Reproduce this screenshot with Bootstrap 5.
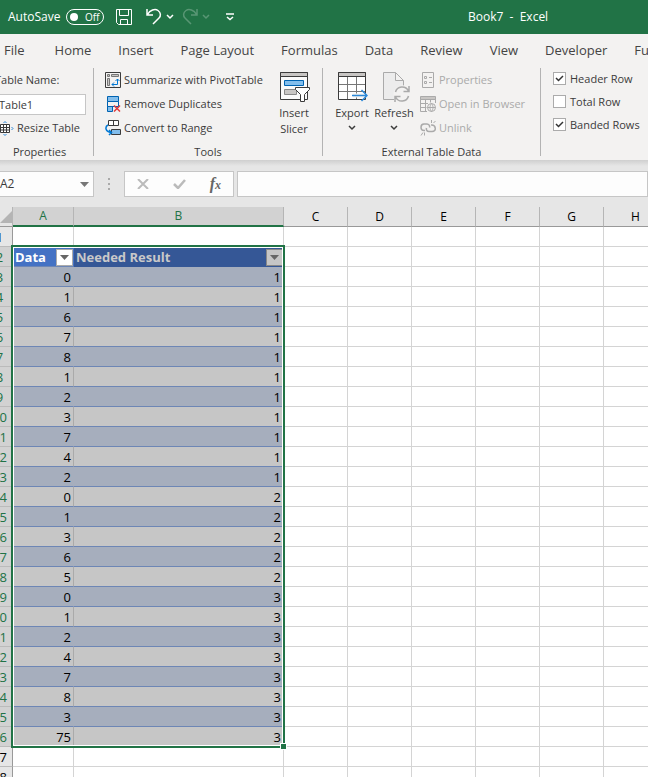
<!DOCTYPE html>
<html lang="en">
<head>
<meta charset="utf-8">
<meta name="viewport" content="width=device-width, initial-scale=1">
<title>Book7 - Excel</title>
<link href="https://cdn.jsdelivr.net/npm/bootstrap@5.3.0/dist/css/bootstrap.min.css" rel="stylesheet">
<style>
body{font:12px/16px "Open Sans","Noto Sans",sans-serif;color:#3b3b3b;background:#e6e6e6;overflow:hidden}
button,input{font:inherit;color:inherit}
button{background:none;border:0;padding:0}
svg{display:block;flex:none;fill:none;stroke:currentColor}
.titlebar{background:#217346;height:34px;padding-left:8px}
.quick{width:240px}
.toggle-pill{width:38px;height:16px;border:1px solid #fff;border-radius:8px;margin:0 12px 0 6px;padding:0 4px 0 3px;font-size:10px;line-height:14px}
.knob{width:8px;height:8px;border-radius:50%;background:#fff}
.save{margin-right:14px}
.book-title{padding-left:220px}
.tabs{background:#f3f2f1;height:32px;padding-left:4px;gap:27px}
.tabs a{color:#444;text-decoration:none;font-size:13px;white-space:nowrap;flex:none}
.tabs .file-tab{padding-right:3px}
.ribbon{background:#f3f2f1;height:94px;padding-top:2px;font-size:11px}
.rgroup{flex:none;border-right:1px solid #b3b3b3;height:88px}
.rbody{height:74px}
.glabel{line-height:20px;text-align:center}
.g-props{width:108px;margin-left:-14px}
.g-props .rbody{padding-left:9px}
.g-tools{width:229px}
.g-tools .rbody{padding:0 7px 0 11px}
.g-ext{width:218px}
.line{height:24px;gap:3px;white-space:nowrap}
.tname{width:91px;height:21px;border:1px solid #c6c6c6;background:#fff;padding:0 3px}
.bigbtn{width:42px;padding-top:2px}
.bigbtn span{line-height:16px;margin-top:3px}
.off{color:#aaa;margin-left:5px}
.gray-ic{color:#aaa}
.opts{padding:0 0 0 12px;margin-top:-1px}
.opts .form-check-input{width:13px;height:13px;border:1px solid #ababab;border-radius:0;margin:0;background-color:#fff;box-shadow:none;background-size:13px}
.opts .form-check-input:checked{background-image:url("data:image/svg+xml,%3Csvg xmlns='http://www.w3.org/2000/svg' viewBox='0 0 13 13'%3E%3Cpath d='M3 6l2.500 2.500L10 4' fill='none' stroke='%23333' stroke-width='1.500'/%3E%3C/svg%3E")}
.opts label{line-height:23px;white-space:nowrap}
.shade{height:6px;background:linear-gradient(#cfcfcf,#e6e6e6)}
.fbar{padding:5px 0 10px}
.fbox{height:26px;background:#fdfdfd;border:1px solid #c6c6c6}
.namebox{width:95px;margin-left:-1px}
.namebox input{width:70px;border:0;background:none;padding:0}
.dots{margin:0 13px 0 14px}
.fxbox{width:110px;margin-right:3px;color:#bbb}
.fx{color:#666;font:italic bold 16px/16px "Liberation Serif",serif}
.fx sub{font-size:12px;bottom:0}
.sheet{position:relative;overflow:hidden;background:#fff}
.grid{table-layout:fixed;width:681px;margin-left:-13px;border-collapse:separate;border-spacing:0;color:#000;font-size:13px;line-height:17px}
.grid th,.grid td{height:20px;padding:2px 2px 0;border-right:1px solid #d4d4d4;border-bottom:1px solid #d4d4d4;font-weight:400;white-space:nowrap}
.grid td{text-align:right}
.grid thead th{background:#e6e6e6;text-align:center;padding:0;line-height:19px;font-size:12px;border-bottom-color:#999;border-right-color:#b5b5b5}
.grid thead th.picked{background:#d2d2d2;color:#217346;border-bottom:2px solid #217346;line-height:18px}
.grid tbody th{background:#e6e6e6;text-align:center;padding:2px 0 0;border-right-color:#999;border-bottom-color:#bbb}
.grid tbody tr.sel th{background:#d2d2d2;color:#217346}
.grid tr.odd td.fill{background:#a6aebd;border-color:#6d86b5}
.grid tr.odd td.num{border-right-color:#a6aebd}
.grid tr.even td.fill{background:#c6c6c6;border-bottom-color:#6d86b5;border-right-color:#aaa}
.grid td.head-a,.grid td.head-b{background:#4472c4;color:#fff;border-right-color:#4472c4;border-bottom-color:#6d86b5;font-weight:700;padding-right:0}
.grid td.head-b{background:#355796;color:#c9c9c9;border-color:#355796}
.filter{width:17px;height:17px;background:#fff;border:1px solid #ababab;color:#666}
.head-b .filter{background:#c6c6c6;border-color:#888}
.corner{display:block;margin-left:auto}
.outline-sel{position:absolute;left:11px;top:38px;width:274px;height:503px;border:2px solid #217346;box-shadow:inset 0 0 0 1px #fff;pointer-events:none}
.outline-sel i{position:absolute;right:-4px;bottom:-4px;width:7px;height:7px;background:#217346;border:1px solid #fff}
</style>
<script src="https://cdn.jsdelivr.net/npm/bootstrap@5.3.0/dist/js/bootstrap.bundle.min.js"></script>
</head>
<body>
<header class="titlebar d-flex align-items-center text-white">
  <div class="quick d-flex align-items-center flex-shrink-0">
    <span>AutoSave</span>
    <button class="toggle-pill d-flex align-items-center justify-content-between" aria-label="AutoSave off"><span class="knob"></span><span>Off</span></button>
    <button class="save" aria-label="Save"><svg width="16" height="16" viewBox="0 0 16 16"><path d="M.5.5h15v15h-13l-2-2zM3.500.5v6h9v-6M4.500 15.500v-5h7v5"/></svg></button>
    <button class="d-flex align-items-center gap-1" aria-label="Undo"><svg width="16" height="18" viewBox="0 0 16 18" stroke-width="1.500"><path d="M1 1v6h6M1.500 6.500C4 2 9 .500 12 2.500s3 5.500 1 7.500L7 16"/></svg><svg width="8" height="6" viewBox="0 0 8 6" stroke-width="1.500"><path d="M1 1l3 3 3-3"/></svg></button>
    <button class="d-flex align-items-center gap-1 ms-2 opacity-25" aria-label="Redo"><svg width="16" height="18" viewBox="0 0 16 18" stroke-width="1.500"><path d="M15 1v6H9M14.500 6.500C12 2 7 .500 4 2.500s-3 5.500-1 7.500l6 6"/></svg><svg width="8" height="6" viewBox="0 0 8 6" stroke-width="1.500"><path d="M1 1l3 3 3-3"/></svg></button>
    <button class="ms-3" aria-label="Customize Quick Access Toolbar"><svg width="8" height="8" viewBox="0 0 8 8" stroke-width="1.500"><path d="M0 1h8M1 4l3 2.500L7 4"/></svg></button>
  </div>
  <span class="book-title text-nowrap">Book7&nbsp; -&nbsp; Excel</span>
</header>
<nav class="tabs d-flex align-items-center">
  <a class="file-tab" href="#">File</a><a href="#">Home</a><a href="#">Insert</a><a href="#">Page Layout</a><a href="#">Formulas</a><a href="#">Data</a><a href="#">Review</a><a href="#">View</a><a href="#">Developer</a><a href="#">Fu</a>
</nav>
<section class="ribbon d-flex">
  <div class="rgroup g-props">
    <div class="rbody">
      <label class="line d-flex align-items-center" for="tn">Table Name:</label>
      <div class="line d-flex align-items-center"><input class="tname" id="tn" value="Table1"></div>
      <button class="line d-flex align-items-center ps-1"><svg width="15" height="15" viewBox="0 0 15 15"><path fill="#fff" d="M1.500 3.500h9v8h-9z"/><path d="M1.500 6.500h9M1.500 9h9M4.500 3.500v8M7.500 3.500v8"/><path stroke="#2b88d8" d="M4.500 2L6 .5 7.500 2M4.500 13L6 14.500 7.500 13M12.500 6L14 7.500 12.500 9"/></svg>Resize Table</button>
    </div>
    <div class="glabel">Properties</div>
  </div>
  <div class="rgroup g-tools">
    <div class="rbody d-flex justify-content-between">
      <div>
        <button class="line d-flex align-items-center"><svg width="16" height="16" viewBox="0 0 16 16"><path d="M.5.5h15v15H.5z"/><path fill="#c8c6c4" stroke="#777" d="M2.500 2.500h2v2h-2zM6.500 2.500h7v2h-7zM2.500 6.500h2v7h-2z"/><path stroke="#0078d4" d="M7 12.500h5.500V7M9 10.500l-2 2 2 2M10.500 9l2-2 2 2"/></svg>Summarize with PivotTable</button>
        <button class="line d-flex align-items-center"><svg width="16" height="16" viewBox="0 0 16 16"><path fill="#83beec" stroke="#0063b1" d="M2.500.5h11v5h-11zM2.500 10.500v5h5v-5z"/><path stroke="#0063b1" d="M2.500 5.500v5h11v-5"/><path stroke="#e03c3c" stroke-width="1.500" d="M9 9.500l6 6M15 9.500l-6 6"/></svg>Remove Duplicates</button>
        <button class="line d-flex align-items-center"><svg width="16" height="16" viewBox="0 0 16 16"><path fill="#fff" d="M3.500.5h10v5h-10zM8.500.5v5"/><path fill="#83beec" d="M6.500 9.500h9v5h-9z"/><path stroke="#0078d4" stroke-width="1.500" d="M3 5C-.5 7 .5 12 6 12.500M4 10l2.500 2.500L4 15"/></svg>Convert to Range</button>
      </div>
      <button class="bigbtn d-flex flex-column align-items-center"><svg width="32" height="32" viewBox="0 0 32 32"><path fill="#fafafa" d="M2.500 2.500h27v27h-27z"/><path fill="#c8c6c4" d="M2.500 2.500h27v4h-27z"/><path fill="#83beec" stroke="#0063b1" d="M6.500 10.500h19v5h-19z"/><path fill="#c8c6c4" stroke="#888" d="M6.500 19.500h12v5h-12z"/><path fill="#fff" d="M17.500 17.500h14v2l-5 5v7h-4v-7l-5-5z"/></svg><span>Insert<br>Slicer</span></button>
    </div>
    <div class="glabel">Tools</div>
  </div>
  <div class="rgroup g-ext">
    <div class="rbody d-flex">
      <button class="bigbtn ms-2 d-flex flex-column align-items-center"><svg width="32" height="32" viewBox="0 0 32 32"><path fill="#fff" stroke="none" d="M2.500 2.500h27v27h-27z"/><path d="M2.500 14.500h27M2.500 21.500h27M11.500 6.500v23M20.500 6.500v23" stroke="#777"/><path d="M2.500 2.500h27v27h-27z"/><path fill="#c8c6c4" d="M2.500 2.500h27v4h-27z"/><path stroke="#f3f2f1" stroke-width="4" d="M17 25.500h14"/><path stroke="#2b88d8" stroke-width="1.500" d="M16 25.500h15M25.500 20l5.500 5.500-5.500 5.500"/></svg><span>Export</span><svg class="mt-1" width="8" height="6" viewBox="0 0 8 6" stroke-width="1.500"><path d="M1 1l3 3 3-3"/></svg></button>
      <button class="bigbtn d-flex flex-column align-items-center"><svg class="gray-ic" width="32" height="32" viewBox="0 0 32 32"><path fill="#ececec" d="M16 29.500H5.500v-27h12l8 8v5M17.500 2.500v8h8"/><circle cx="24" cy="24" r="8.500" fill="#f3f2f1" stroke="none"/><path stroke-width="1.500" d="M17.500 22c1.500-6 10-7 13-1M31 16v5.500h-5.500M30.500 26c-1.500 6-10 7-13 1M17 32v-5.500h5.500"/></svg><span>Refresh</span><svg class="mt-1" width="8" height="6" viewBox="0 0 8 6" stroke-width="1.500"><path d="M1 1l3 3 3-3"/></svg></button>
      <div class="off">
        <button class="line d-flex align-items-center" disabled><svg width="16" height="16" viewBox="0 0 16 16"><path d="M2.500.5h11v15h-11z"/><path d="M4.500 4.500h2v2h-2zM4.500 9.500h2v2h-2zM9 5.500h3M9 10.500h3"/></svg>Properties</button>
        <button class="line d-flex align-items-center" disabled><svg width="16" height="16" viewBox="0 0 16 16"><path fill="#c8c6c4" d="M.5.5h15v3H.5z"/><path d="M7 15.500H.5V3.500h15V7M.5 7.500H8M.5 11.500h6M5.500 3.500v12M10.500 3.500v3"/><circle cx="11.500" cy="11.500" r="4"/><path d="M7.500 11.500h8M11.500 7.500c-2 2.500-2 5.500 0 8c2-2.500 2-5.500 0-8"/></svg>Open in Browser</button>
        <button class="line d-flex align-items-center" disabled><svg width="16" height="16" viewBox="0 0 16 16"><path stroke-width="1.500" d="M5 10.500H4C0 10.500 0 4 4 4h3c2 0 3 2 2.500 3.500M11 5c5-.5 6 6.500 1 6.500H9C7 11.500 6 10 6.500 8"/><path d="M11.500 0v3M15.500 1l-2 2M1 15.500l2-3M4.500 15.500v-3"/></svg>Unlink</button>
      </div>
    </div>
    <div class="glabel">External Table Data</div>
  </div>
  <div class="opts">
    <div class="d-flex align-items-center gap-1"><input class="form-check-input" type="checkbox" id="c1" checked><label for="c1">Header Row</label></div>
    <div class="d-flex align-items-center gap-1"><input class="form-check-input" type="checkbox" id="c2"><label for="c2">Total Row</label></div>
    <div class="d-flex align-items-center gap-1"><input class="form-check-input" type="checkbox" id="c3" checked><label for="c3">Banded Rows</label></div>
  </div>
</section>
<div class="shade"></div>
<div class="fbar d-flex align-items-center">
  <div class="fbox namebox d-flex align-items-center justify-content-between pe-1 flex-shrink-0"><input value="A2" aria-label="Name box"><button aria-label="Names"><svg width="9" height="5" viewBox="0 0 9 5"><path d="M0 0h9L4.500 5z" fill="#777" stroke="none"/></svg></button></div>
  <svg class="dots" width="3" height="12" viewBox="0 0 3 12"><path d="M0 0h2v2H0zM0 5h2v2H0zM0 10h2v2H0z" fill="#aaa" stroke="none"/></svg>
  <div class="fbox fxbox d-flex align-items-center justify-content-around flex-shrink-0">
    <button aria-label="Cancel"><svg width="12" height="10" viewBox="0 0 12 10" stroke-width="2"><path d="M1 0l10 10M11 0L1 10"/></svg></button>
    <button aria-label="Enter"><svg width="13" height="10" viewBox="0 0 13 10" stroke-width="2.500"><path d="M1 5l4 4 7-8"/></svg></button>
    <button class="fx" aria-label="Insert function">f<sub>x</sub></button>
  </div>
  <input class="fbox flex-grow-1" aria-label="Formula">
</div>
<main class="sheet">
  <table class="grid">
    <colgroup><col style="width:26px"><col style="width:61px"><col style="width:210px"><col><col><col><col><col><col></colgroup>
    <thead><tr><th><svg class="corner" width="12" height="12" viewBox="0 0 12 12"><path d="M12 0v12H0z" fill="#b4b4b4" stroke="none"/></svg></th><th class="picked">A</th><th class="picked">B</th><th>C</th><th>D</th><th>E</th><th>F</th><th>G</th><th>H</th></tr></thead>
    <tbody id="rows"></tbody>
  </table>
  <div class="outline-sel"><i></i></div>
</main>
<script>
const data=[0,1,6,7,8,1,2,3,7,4,2,0,1,3,6,5,0,1,2,4,7,8,3,75];
const blanks='<td></td>'.repeat(6);
const filter='<button class="filter d-flex align-items-center justify-content-center" aria-label="Filter"><svg width="9" height="5" viewBox="0 0 9 5"><path d="M0 0h9L4.5 5z" fill="currentColor" stroke="none"/></svg></button>';
const head=(c,t)=>`<td class="${c}"><div class="d-flex align-items-center justify-content-between"><span>${t}</span>${filter}</div></td>`;
let html='<tr><th>1</th><td></td><td></td>'+blanks+'</tr><tr class="sel"><th>2</th>'+head('head-a','Data')+head('head-b','Needed Result')+blanks+'</tr>';
data.forEach((v,i)=>{html+=`<tr class="sel ${i%2?'even':'odd'}"><th>${i+3}</th><td class="fill num">${v}</td><td class="fill">${i<11?1:i<16?2:3}</td>${blanks}</tr>`});
[27,28].forEach(n=>{html+=`<tr><th>${n}</th><td></td><td></td>${blanks}</tr>`});
document.getElementById('rows').innerHTML=html;
</script>
</body>
</html>
